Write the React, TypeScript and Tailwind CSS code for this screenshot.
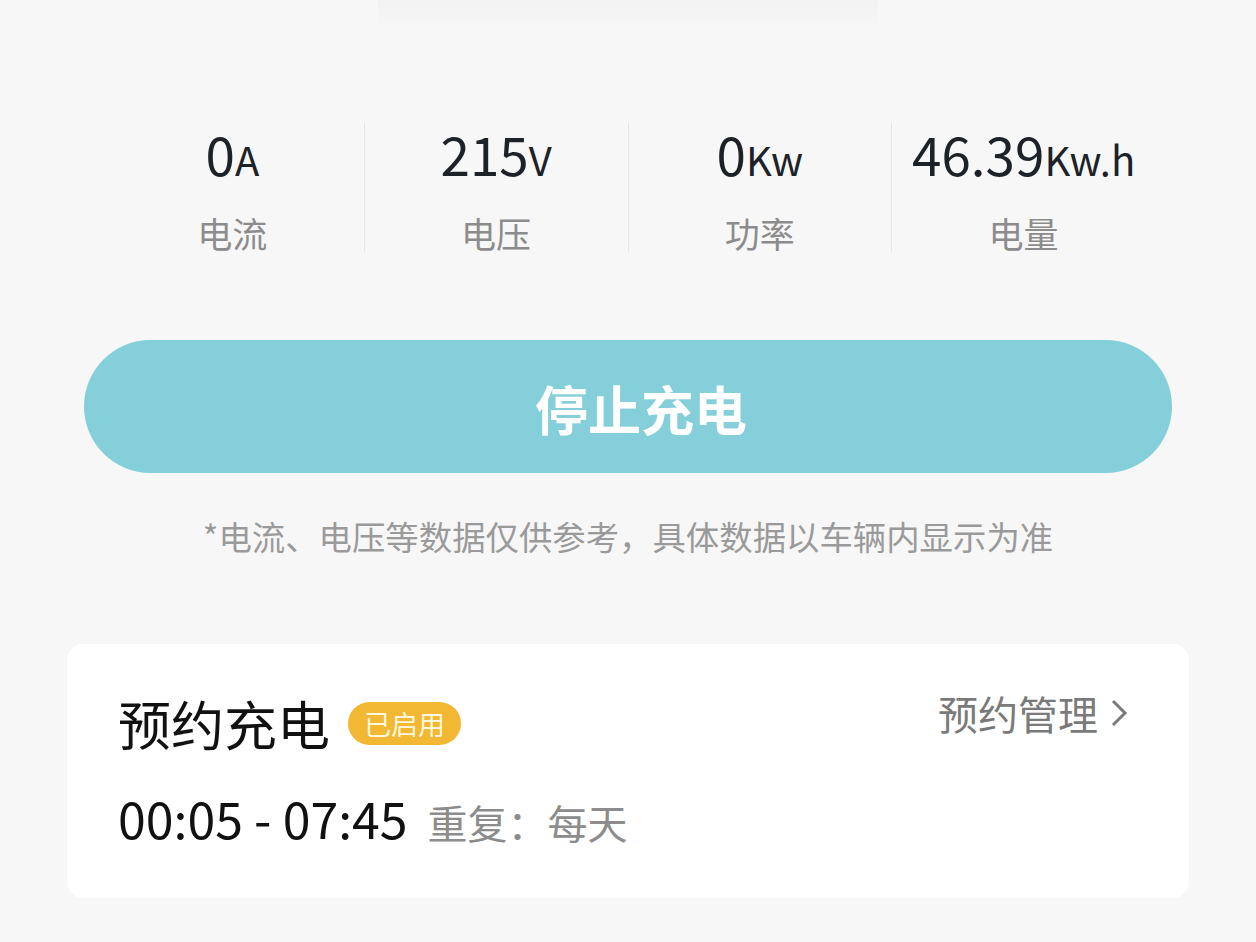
import React from "react";

const stats = [
  { value: "0", unit: "A", label: "电流" },
  { value: "215", unit: "V", label: "电压" },
  { value: "0", unit: "Kw", label: "功率" },
  { value: "46.39", unit: "Kw.h", label: "电量" },
];

function StatItem({ value, unit, label, last }: { value: string; unit: string; label: string; last: boolean }) {
  return (
    <div className={`flex flex-1 flex-col items-center ${last ? "" : "border-r border-[#e6e6e6]"}`}>
      <div className="mt-[4px] flex h-[56px] items-baseline leading-none text-[#1c2227]">
        <span className="text-[53px]">{value}</span>
        <span className="text-[40px]">{unit}</span>
      </div>
      <div className="mt-[32px] text-[35px] leading-none text-[#8c8c8c]">{label}</div>
    </div>
  );
}

export default function App() {
  return (
    <div
      className="h-[942px] w-[1256px] overflow-hidden bg-[#f7f7f7]"
      style={{ fontFamily: '"Noto Sans CJK SC", "Noto Sans", sans-serif' }}
    >
      {/* faded top strip */}
      <div className="flex h-[36px] justify-center">
        <div className="h-[30px] w-[500px] bg-gradient-to-b from-[#f2f2f2] to-[#f7f7f7]" />
      </div>

      {/* Stats */}
      <div className="mx-[101px] mt-[87px] flex h-[129px]">
        {stats.map((s, i) => (
          <StatItem key={s.label} {...s} last={i === stats.length - 1} />
        ))}
      </div>

      {/* Stop button */}
      <div className="mt-[88px] px-[84px]">
        <button className="flex h-[133px] w-full items-center justify-center rounded-full bg-[#84cfd9] pl-[26px] pt-[4px] text-[53px] font-bold leading-none text-white">
          停止充电
        </button>
      </div>

      <p className="mt-[46px] text-center text-[33.4px] leading-none text-[#9a9a9a]">
        *电流、电压等数据仅供参考，具体数据以车辆内显示为准
      </p>

      {/* Reservation card */}
      <div className="mx-[67px] mt-[92px] h-[254px] rounded-[16px] bg-white px-[51px] pt-[53px]">
        <div className="flex items-start justify-between">
          <div className="flex items-center gap-[18px]">
            <span className="text-[53px] leading-none text-[#111]">预约充电</span>
            <span className="rounded-full bg-[#f2b733] px-[16px] py-[6px] text-[27px] leading-[31px] text-[#fff8dc]">
              已启用
            </span>
          </div>
          <div className="mr-[10px] -mt-[4px] flex items-center gap-[12px] text-[40px] leading-none text-[#7a7a7a]">
            <span>预约管理</span>
            <svg width="18" height="30" viewBox="0 0 18 30" fill="none">
              <path d="M3 3l12 12-12 12" stroke="#7a7a7a" strokeWidth="3" />
            </svg>
          </div>
        </div>
        <div className="mt-[42px] flex items-baseline gap-[20px]">
          <span className="text-[50px] leading-none text-[#111]">00:05 - 07:45</span>
          <span className="text-[40px] leading-none text-[#8c8c8c]">重复：每天</span>
        </div>
      </div>
    </div>
  );
}
